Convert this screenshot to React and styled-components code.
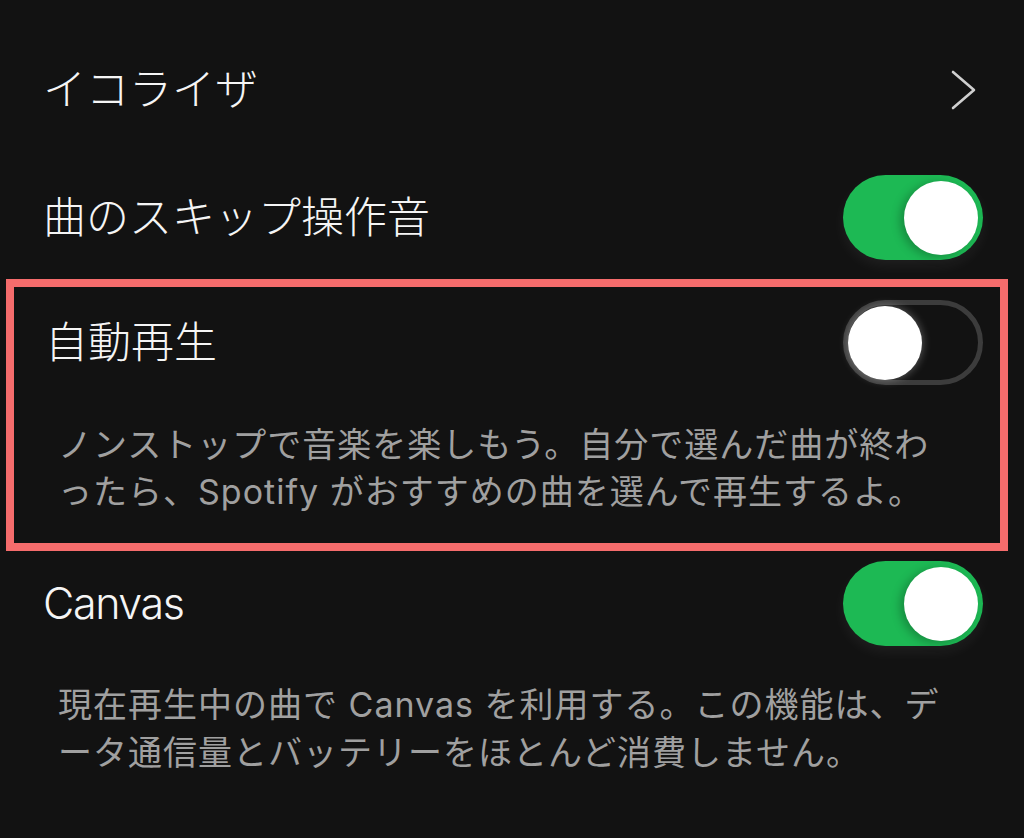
import styled, { createGlobalStyle } from "styled-components";

const GlobalStyle = createGlobalStyle`
  html, body {
    margin: 0;
    padding: 0;
    background: #121212;
  }
  body {
    font-family: Inter, "Noto Sans CJK JP", sans-serif;
  }
`;

const Page = styled.div`
  width: 1024px;
  height: 838px;
  box-sizing: border-box;
  padding-top: 47px;
  background: #121212;
  overflow: hidden;
`;

const Row = styled.div`
  display: flex;
  align-items: center;
  justify-content: space-between;
  height: 85px;
  padding: 0 41px 0 43px;
  margin-top: ${({ $gap }) => $gap || 0}px;
`;

const Title = styled.span`
  font-size: 43px;
  font-weight: 300;
  line-height: 1;
  color: #f5f5f5;
  white-space: nowrap;
  letter-spacing: ${({ $latin }) => ($latin ? "-1.4px" : "0")};
`;

const Description = styled.p`
  margin: ${({ $gap }) => $gap || 0}px 0 0;
  padding: 0 40px 0 58px;
  font-size: 34px;
  letter-spacing: 1px;
  line-height: ${({ $lh }) => $lh || 47}px;
  color: #a0a0a0;
  white-space: nowrap;
`;

const Highlight = styled.section`
  margin: 19px 16px 0 6px;
  padding: 13px 0 28px;
  border: 8px solid #f56c6c;

  ${Row} {
    padding: 0 17px 0 31px;
  }
  ${Description} {
    padding: 0 20px 0 44px;
  }
`;

const Track = styled.div`
  box-sizing: border-box;
  display: flex;
  align-items: center;
  justify-content: ${({ $on }) => ($on ? "flex-end" : "flex-start")};
  width: 140px;
  height: 85px;
  padding: ${({ $on }) => ($on ? "0 5px" : "0")};
  border-radius: 43px;
  background: ${({ $on }) => ($on ? "#1db954" : "#121212")};
  border: ${({ $on }) => ($on ? "none" : "5px solid #3c3c3c")};
  box-shadow: ${({ $on }) =>
    $on ? "0 6px 14px rgba(255,255,255,0.06)" : "none"};
`;

const Knob = styled.div`
  width: 74px;
  height: 74px;
  border-radius: 50%;
  background: #ffffff;
  box-shadow: ${({ $on }) =>
    $on
      ? "-4px 2px 10px rgba(0,0,0,0.25)"
      : "0 0 10px rgba(255,255,255,0.35)"};
`;

const Chevron = styled.svg`
  width: 26px;
  height: 40px;
  margin-right: 6px;
`;

function Toggle({ on }) {
  return (
    <Track $on={on}>
      <Knob $on={on} />
    </Track>
  );
}

export default function App() {
  return (
    <>
      <GlobalStyle />
      <Page>
        <Row>
          <Title>イコライザ</Title>
          <Chevron viewBox="0 0 26 40">
            <polyline
              points="2,2 23,20 2,38"
              fill="none"
              stroke="#cfcfcf"
              strokeWidth="2.6"
              strokeLinecap="round"
              strokeLinejoin="round"
            />
          </Chevron>
        </Row>
        <Row $gap={43}>
          <Title>曲のスキップ操作音</Title>
          <Toggle on />
        </Row>
        <Highlight>
          <Row>
            <Title>自動再生</Title>
            <Toggle on={false} />
          </Row>
          <Description $gap={36}>
            ノンストップで音楽を楽しもう。自分で選んだ曲が終わ
            <br />
            ったら、Spotify がおすすめの曲を選んで再生するよ。
          </Description>
        </Highlight>
        <Row $gap={10}>
          <Title $latin>Canvas</Title>
          <Toggle on />
        </Row>
        <Description $gap={35} $lh={48}>
          現在再生中の曲で Canvas を利用する。この機能は、デ
          <br />
          ータ通信量とバッテリーをほとんど消費しません。
        </Description>
      </Page>
    </>
  );
}
